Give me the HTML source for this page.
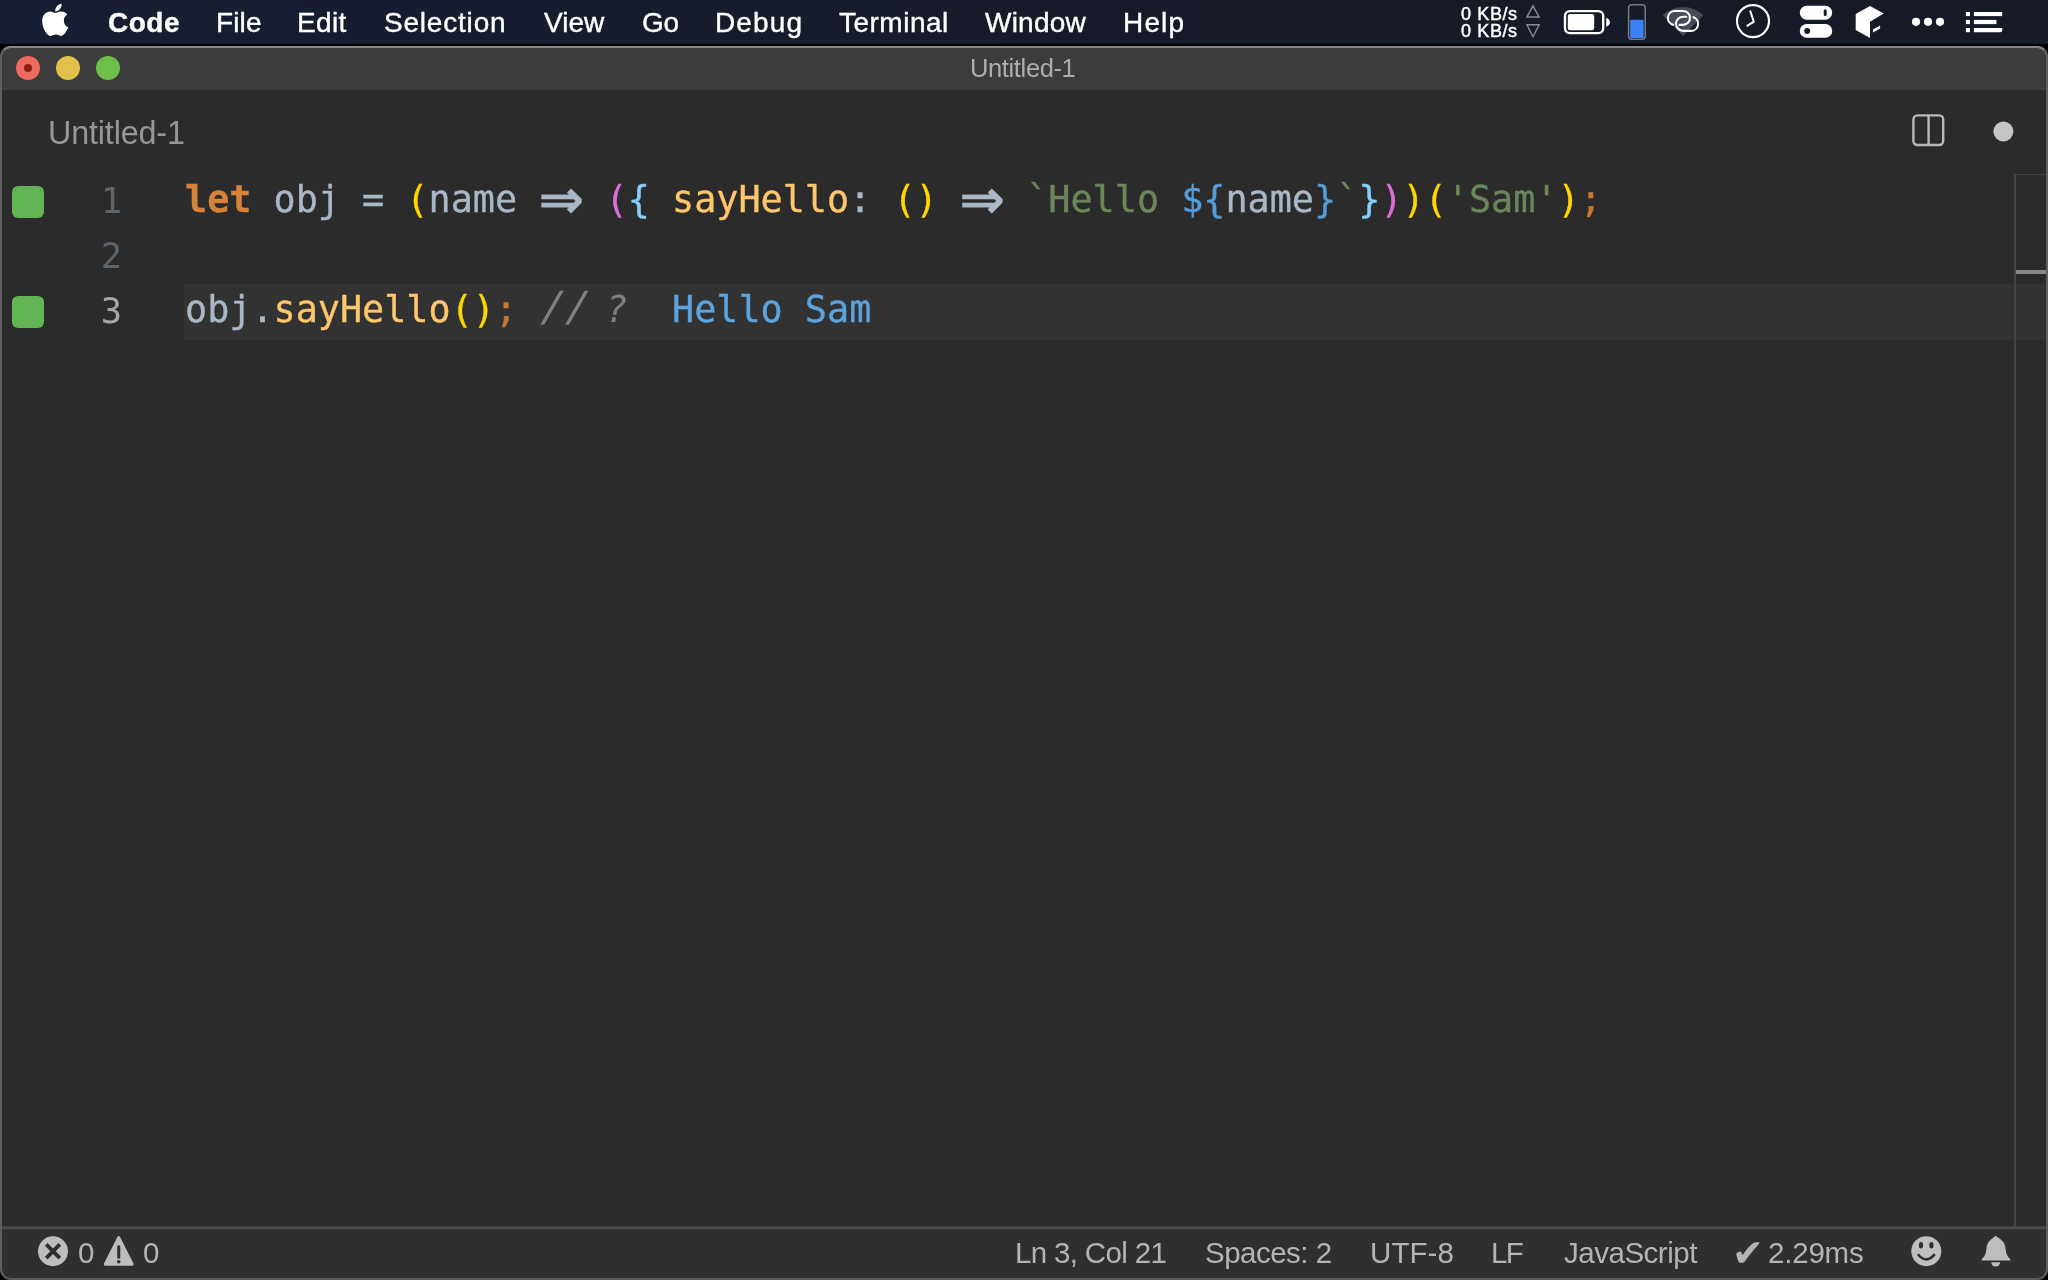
<!DOCTYPE html>
<html lang="en">
<head>
<meta charset="utf-8">
<title>Untitled-1</title>
<style>
*{box-sizing:border-box;margin:0;padding:0}
html,body{width:2048px;height:1280px;overflow:hidden;background:#000}
body{position:relative;font-family:"Liberation Sans",sans-serif;color:#fff}
svg{position:absolute;left:0;top:0;overflow:visible}
.mi,.kb,.tt,.tab,.ln,.code,.si{will-change:transform}
#menubar{position:absolute;left:0;top:0;width:2048px;height:44px;background:linear-gradient(90deg,#171e33 0%,#171c2d 30%,#171a27 62%,#161b27 100%)}
#menubar .mi{position:absolute;top:0;height:44px;line-height:45px;font-size:28px;color:#fff;white-space:nowrap;-webkit-text-stroke-width:0.4px}
#menubar .mi.b{font-weight:bold}
#menubar .kb{position:absolute;height:18px;line-height:18px;font-size:18px;color:#fff;white-space:nowrap;-webkit-text-stroke:0.45px #fff}
#win{position:absolute;left:0;top:46px;width:2048px;height:1234px;background:#2b2b2b;border-radius:11px;overflow:hidden}
#winborder{position:absolute;left:0;top:46px;width:2048px;height:1234px;border-radius:11px;border:2px solid #606060;border-top-color:#858585;border-bottom-color:#585858;pointer-events:none}
#titlebar{position:absolute;left:0;top:0;width:2048px;height:44px;background:#3c3c3c}
#titlebar .tt{position:absolute;top:2px;height:42px;line-height:40px;font-size:25.5px;color:#adadad;white-space:nowrap}
.tl{position:absolute;top:9.8px;width:24.4px;height:24.4px;border-radius:50%}
#tabbar{position:absolute;left:0;top:44px;width:2048px;height:84px;background:#2b2b2b}
#tabbar .tab{position:absolute;top:0;height:84px;line-height:87px;font-size:32.3px;color:#979797;white-space:nowrap}
#editor{position:absolute;left:0;top:128px;width:2048px;height:1052px;background:#2b2b2b}
.hl{position:absolute;left:184px;top:110px;width:1864px;height:56px;background:#323232}
.ln{position:absolute;left:60px;width:62px;text-align:right;height:55px;line-height:55px;font-family:"DejaVu Sans Mono","Liberation Mono",monospace;font-size:35.5px;color:#5c646c;margin-top:-1px}
.gsq{position:absolute;left:12px;width:32px;height:32px;border-radius:6px;background:#62b455}
.code{position:absolute;left:184.700px;height:55px;line-height:55px;white-space:pre;font-family:"DejaVu Sans Mono","Liberation Mono",monospace;font-size:36.78px;color:#a9b7c6;margin-top:-2px;-webkit-text-stroke-width:0.35px}
.ar{display:inline-block;width:44.280px;height:40px;vertical-align:baseline;position:relative}
.ar i{position:absolute;left:-10px;width:64.4px;text-align:center;top:0;font-style:normal;font-family:"DejaVu Sans","Liberation Sans",sans-serif;font-weight:bold;font-size:54.5px;line-height:55px}
.k{color:#d5823a;font-weight:bold}.y{color:#ffd700}.p{color:#da70d6}.b{color:#87cefa}.f{color:#ffc66d}.s{color:#6a8759}.t{color:#569cd6}.o{color:#cc7832}.c{color:#808080;font-style:italic;-webkit-text-stroke-width:0}.q{color:#5aa4e0}
.sl{display:inline-block;transform:translateX(3px) scale(1.12,1.13) skewX(-4deg);transform-origin:40% 82%}
#ruler{position:absolute;left:2014px;top:0;width:34px;height:1052px;border-left:2px solid #464646;border-top:1px solid #444}
#ruler .cur{position:absolute;left:0;top:95px;width:32px;height:4px;background:#8a8a88}
#status{position:absolute;left:0;top:1180px;width:2048px;height:54px;background:linear-gradient(180deg,#414141 0,#414141 1px,#4b4b4b 1px,#4b4b4b 3px,#3a3a3a 3px,#3a3a3a 4px,#2f2f2f 4px,#2f2f2f 100%)}
#status .si{position:absolute;top:3px;height:50px;line-height:47px;font-size:29.5px;color:#b4b4b4;white-space:nowrap}
</style>
</head>
<body>
<div id="menubar">
<svg width="2048" height="44" viewBox="0 0 2048 44">
<g transform="translate(41.900,1.400) scale(0.0690,0.0719)" fill="#fff"><path d="M318.7 268.7c-.2-36.7 16.4-64.400 50-84.800-18.800-26.900-47.200-41.700-84.700-44.600-35.500-2.800-74.300 20.700-88.500 20.700-15 0-49.400-19.700-76.400-19.700C63.300 141.200 4 184.800 4 273.500q0 39.300 14.400 81.200c12.800 36.700 59 126.700 107.200 125.200 25.200-.6 43-17.900 75.800-17.900 31.800 0 48.300 17.900 76.400 17.900 48.600-.7 90.400-82.500 102.600-119.300-65.200-30.700-61.700-90-61.700-91.900zm-56.600-164.200c27.300-32.400 24.800-61.900 24-72.500-24.100 1.400-52 16.400-67.900 34.900-17.500 19.800-27.800 44.300-25.600 71.900 26.100 2 49.900-11.400 69.500-34.300z"/></g>
<g fill="none" stroke="#8b8d96" stroke-width="1.4" stroke-linejoin="miter"><path d="M1533 5.800L1539.100 17H1526.900Z"/><path d="M1533 36.800L1539.100 24.700H1526.900Z"/></g>
<rect x="1565" y="11.100" width="38.200" height="22" rx="4.800" fill="none" stroke="#fff" stroke-width="2.400"/>
<rect x="1567.800" y="13.900" width="26.400" height="16.400" rx="2.200" fill="#fff"/>
<path d="M1606.200 17.800c2.400.6 3.700 2.400 3.700 4.400s-1.300 3.900-3.700 4.500z" fill="#fff"/>
<rect x="1628.600" y="4.700" width="16.600" height="34.600" rx="3" fill="none" stroke="#787a84" stroke-width="1.500"/>
<rect x="1630.200" y="19.700" width="13.400" height="18.200" rx="1" fill="#3b82f6"/>
<path d="M1683 36.100L1662.750 15.300A29.100 29.100 0 0 1 1703.300 15.300Z" fill="#474a58"/>
<g fill="none" stroke="#fff" stroke-width="2.100" stroke-linecap="round">
<path d="M1679.600 24.900H1683.050A6.950 6.950 0 0 0 1683.050 11H1674.850A6.950 6.950 0 0 0 1673.200 24.700"/>
<path d="M1686.300 16.700H1683.100A7.100 7.100 0 0 0 1683.100 30.900H1691A7.100 7.100 0 0 0 1693.500 17.150"/>
</g>
<circle cx="1753" cy="21.100" r="16" fill="none" stroke="#fff" stroke-width="2.200"/>
<path d="M1750.100 10.500L1753.800 21.700L1746.700 26.200" fill="none" stroke="#fff" stroke-width="2" stroke-linecap="butt" stroke-linejoin="miter"/>
<rect x="1799.800" y="5.700" width="32.400" height="14" rx="7" fill="#fff"/>
<rect x="1799.800" y="24" width="32.400" height="13.800" rx="6.900" fill="#fff"/>
<rect x="1823.700" y="9.300" width="3" height="6.800" rx="1.500" fill="#171a27"/>
<circle cx="1807.200" cy="31" r="3" fill="#171a27"/>
<path d="M1870 5.900L1883.700 13.400L1870 21.800V38.100L1855.700 30V14.100Z" fill="#fff"/>
<path d="M1873 29.500L1880.100 25.400V28.400L1873 32.500Z" fill="#fff"/>
<circle cx="1916" cy="21.800" r="4.100" fill="#fff"/><circle cx="1928" cy="21.800" r="4.100" fill="#fff"/><circle cx="1940" cy="21.800" r="4.100" fill="#fff"/>
<g fill="#fff"><rect x="1965.900" y="12" width="4.100" height="4.100"/><rect x="1965.900" y="19.900" width="4.100" height="4.200"/><rect x="1965.900" y="28" width="4.100" height="4.200"/>
<rect x="1973.900" y="12" width="28.300" height="4.100"/><rect x="1973.900" y="19.900" width="22.500" height="4.200"/><path d="M1973.900 28h28.300v2.200a2 2 0 0 1-2 2h-26.300z"/></g>
</svg>
<div class="mi b" style="left:108px;letter-spacing:0.52px;">Code</div>
<div class="mi" style="left:215.5px;letter-spacing:0.15px;">File</div>
<div class="mi" style="left:297px;letter-spacing:0.34px;">Edit</div>
<div class="mi" style="left:384px;letter-spacing:0.8px;">Selection</div>
<div class="mi" style="left:543.5px;letter-spacing:0.01px;">View</div>
<div class="mi" style="left:642px;letter-spacing:-0.28px;">Go</div>
<div class="mi" style="left:715px;letter-spacing:1.14px;">Debug</div>
<div class="mi" style="left:839px;letter-spacing:0.49px;">Terminal</div>
<div class="mi" style="left:985px;letter-spacing:0.23px;">Window</div>
<div class="mi" style="left:1122.5px;letter-spacing:1.16px;">Help</div>
<div class="kb" style="left:1460.7px;letter-spacing:0.62px;top:4.500px">0 KB/s</div>
<div class="kb" style="left:1460.7px;letter-spacing:0.62px;top:22.300px">0 KB/s</div>
</div>
<div id="win">
  <div id="titlebar">
    <div class="tl" style="left:15.800px;background:#ee6a5f"></div>
    <div class="tl" style="left:55.800px;background:#e1c04c"></div>
    <div class="tl" style="left:95.800px;background:#6cc04a"></div>
    <div class="tl" style="left:24px;top:18px;width:8px;height:8px;background:#8e1a10"></div>
    <div class="tt" style="left:970.3px;letter-spacing:-0.37px;">Untitled-1</div>
  </div>
  <div id="tabbar"><svg width="2048" height="84" viewBox="0 0 2048 84">
<rect x="1913.400" y="25.400" width="29.800" height="29.600" rx="4" fill="none" stroke="#b9b9b9" stroke-width="2.400"/>
<path d="M1928.600 25.400V55" stroke="#b9b9b9" stroke-width="2.400" fill="none"/>
<circle cx="2003.400" cy="41.500" r="10" fill="#c6c6c6"/>
</svg><div class="tab" style="left:47.6px;letter-spacing:-0.15px;">Untitled-1</div></div>
  <div id="editor">
    <div class="hl"></div>
    <div id="ruler"><div class="cur"></div></div>
    <div class="gsq" style="top:12px"></div>
    <div class="gsq" style="top:122px"></div>
    <div class="ln" style="top:0">1</div>
    <div class="ln" style="top:55px">2</div>
    <div class="ln" style="top:110px;color:#a4a8ac">3</div>
    <div class="code" style="top:0"><span class="k">let</span> obj = <span class="y">(</span>name <span class="ar"><i>⇒</i></span> <span class="p">(</span><span class="b">{</span> <span class="f">sayHello</span>: <span class="y">()</span> <span class="ar"><i>⇒</i></span> <span class="s">`Hello </span><span class="t">${</span>name<span class="t">}</span><span class="s">`</span><span class="b">}</span><span class="p">)</span><span class="y">)(</span><span class="s">'Sam'</span><span class="y">)</span><span class="o">;</span></div>
    <div class="code" style="top:110px">obj.<span class="f">sayHello</span><span class="y">()</span><span class="o">;</span> <span class="c"><span class="sl">//</span> ?</span>  <span class="q">Hello Sam</span></div>
  </div>
  <div id="status">
    <svg style="top:3px" width="2048" height="51" viewBox="0 1229 2048 51">
<circle cx="53" cy="1251.250" r="15" fill="#bdbdbd"/>
<path d="M46.200 1244.400L59.800 1258.100M59.800 1244.400L46.200 1258.100" stroke="#2f2f2f" stroke-width="3.800" fill="none"/>
<path d="M118.750 1237.600L132.200 1264.200H105.300Z" fill="#bdbdbd" stroke="#bdbdbd" stroke-width="3" stroke-linejoin="round"/>
<path d="M118.750 1245.600V1258.400" stroke="#2f2f2f" stroke-width="3"/>
<circle cx="118.750" cy="1261.700" r="1.800" fill="#2f2f2f"/>
<circle cx="1926.300" cy="1251.200" r="15" fill="#bfbfbf"/>
<ellipse cx="1921" cy="1245.200" rx="2.100" ry="3.200" fill="#2f2f2f"/><ellipse cx="1931.400" cy="1245.200" rx="2.100" ry="3.200" fill="#2f2f2f"/>
<path d="M1917.800 1254.200Q1926.300 1264.600 1934.900 1254.200" fill="none" stroke="#2f2f2f" stroke-width="2.600" stroke-linecap="butt"/>
<path d="M1995.500 1235.800C1998 1238 2005.300 1240.500 2005.600 1249C2005.900 1254.500 2008.500 1257.800 2010.400 1259.200V1260.400H1981.600V1259.200C1983.500 1257.800 1986.100 1254.500 1986.400 1249C1986.700 1240.500 1994 1238 1995.500 1235.800Z" fill="#bdbdbd"/>
<path d="M1991.300 1262.200H2000.100A4.400 4.300 0 0 1 1991.300 1262.200Z" fill="#bdbdbd"/>
</svg>
    <div class="si" style="left:77.75px;letter-spacing:0px;">0</div>
    <div class="si" style="left:143.4px;letter-spacing:0px;">0</div>
    <div class="si" style="left:1015.4px;letter-spacing:-0.66px;">Ln 3, Col 21</div>
    <div class="si" style="left:1205px;letter-spacing:-0.52px;">Spaces: 2</div>
    <div class="si" style="left:1369.5px;letter-spacing:0.08px;">UTF-8</div>
    <div class="si" style="left:1491.3px;letter-spacing:-1.71px;">LF</div>
    <div class="si" style="left:1563.7px;letter-spacing:-0.48px;">JavaScript</div>
    <div class="si" style="left:1731.500px;font-family:'DejaVu Sans',sans-serif;font-size:38px;line-height:48px">✔</div>
    <div class="si" style="left:1768px;letter-spacing:-0.2px;">2.29ms</div>
  </div>
</div>
<div id="winborder"></div>
</body>
</html>
